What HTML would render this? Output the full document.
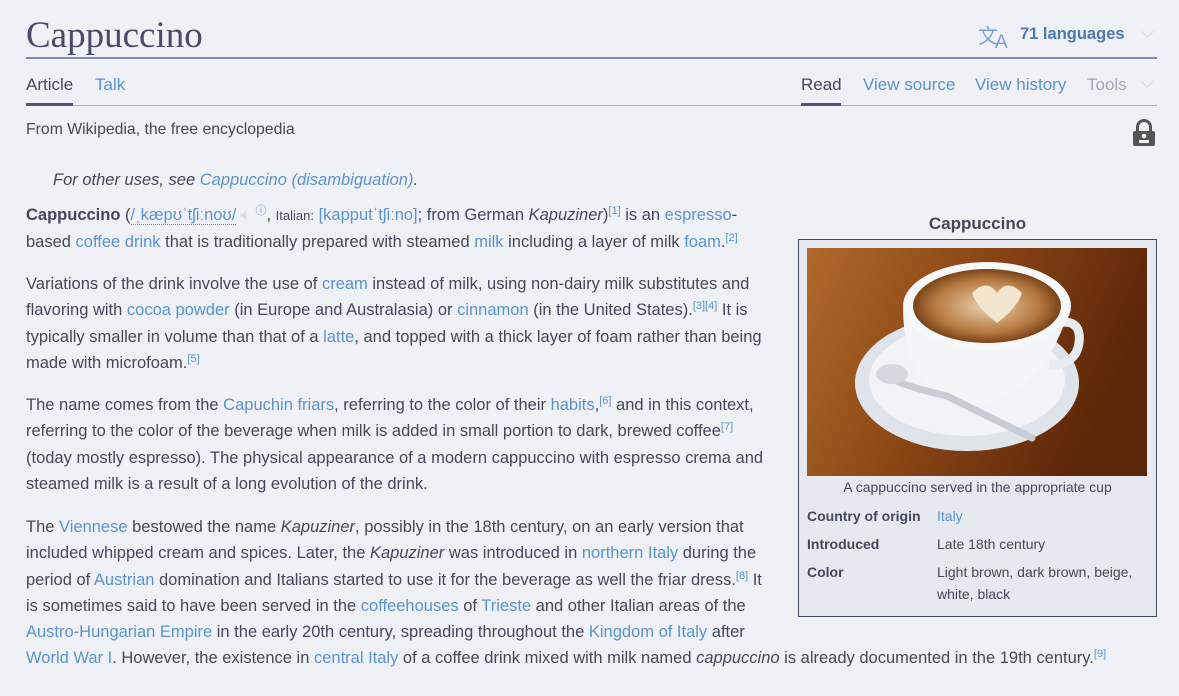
<!DOCTYPE html>
<html><head><meta charset="utf-8"><style>
body{margin:0;width:1179px;height:696px;background:#eff1f6;font-family:"Liberation Sans",sans-serif;color:#45475c;overflow:hidden;position:relative}
a{color:#5b93cf;text-decoration:none}
.abs{position:absolute;white-space:nowrap}
h1{position:absolute;left:26px;top:14px;margin:0;font-family:"Liberation Serif",serif;font-weight:normal;font-size:37px;color:#4a4c66}
.rule1{position:absolute;left:26px;top:57px;width:1131px;height:2px;background:#7d8bab}
.rule2{position:absolute;left:26px;top:105px;width:1131px;height:1px;background:#a8b0c6}
.tab{position:absolute;top:75px;font-size:17px}
.sel{position:absolute;top:103px;height:3px;background:#565872}
.txt{position:absolute;left:26px;width:760px;font-size:16.5px;line-height:26.3px;white-space:nowrap}
sup{font-size:11px;line-height:0;vertical-align:6px;color:#5b93cf}
.ib{position:absolute;left:798px;top:239px;width:357px;height:376px;border:1px solid #3f4a60;background:#e6e9f0}
.ib td{font-size:14px;padding:0;vertical-align:top}
.chev{position:absolute;width:8px;height:8px;border-right:1.5px solid #d6dbe6;border-bottom:1.5px solid #d6dbe6;transform:rotate(45deg)}
</style></head><body>
<h1>Cappuccino</h1>
<div class="abs" style="left:978px;top:20px;font-size:20px;color:#7f9fdc;letter-spacing:-3px">文<span style="font-size:19px;position:relative;top:5px">A</span></div>
<div class="abs" style="left:1020px;top:25px;font-size:16.5px;font-weight:bold;color:#4d78b0">71 languages</div>
<div class="chev" style="left:1143px;top:27px"></div>
<div class="rule1"></div>
<div class="tab" style="left:26px">Article</div>
<div class="tab" style="left:95px"><a>Talk</a></div>
<div class="tab" style="left:801px">Read</div>
<div class="tab" style="left:863px"><a>View source</a></div>
<div class="tab" style="left:975px"><a>View history</a></div>
<div class="tab" style="left:1087px;color:#a4a7ba">Tools</div>
<div class="chev" style="left:1143px;top:77px"></div>
<div class="rule2"></div>
<div class="sel" style="left:26px;width:47px"></div>
<div class="sel" style="left:801px;width:40px"></div>
<div class="abs" style="left:26px;top:121px;font-size:15.8px">From Wikipedia, the free encyclopedia</div>
<svg class="abs" style="left:1133px;top:118px" width="22" height="29" viewBox="0 0 22 29"><path d="M4.5 14V9a6.5 6.5 0 0 1 13 0v5" fill="none" stroke="#555" stroke-width="3"/><rect x="0" y="13" width="22" height="15" rx="2" fill="#555"/><circle cx="11" cy="18" r="2.3" fill="#fff"/><rect x="6" y="22" width="10" height="3" rx="1" fill="#fff"/></svg>
<div class="abs" style="left:53px;top:171px;font-size:16.5px;font-style:italic">For other uses, see <a>Cappuccino (disambiguation)</a>.</div>

<div class="txt" style="top:202px"><b>Cappuccino</b> (<a style="border-bottom:1px dotted #5b93cf">/ˌkæpʊˈtʃiːnoʊ/</a> <span style="color:#ddd">🔈︎</span> <sup>ⓘ</sup>, <span style="font-size:13px">Italian:</span> <a>[kapputˈtʃiːno]</a>; from German <i>Kapuziner</i>)<sup>[1]</sup> is an <a>espresso</a>-<br>based <a>coffee drink</a> that is traditionally prepared with steamed <a>milk</a> including a layer of milk <a>foam</a>.<sup>[2]</sup></div>
<div class="txt" style="top:271px">Variations of the drink involve the use of <a>cream</a> instead of milk, using non-dairy milk substitutes and<br>flavoring with <a>cocoa powder</a> (in Europe and Australasia) or <a>cinnamon</a> (in the United States).<sup>[3][4]</sup> It is<br>typically smaller in volume than that of a <a>latte</a>, and topped with a thick layer of foam rather than being<br>made with microfoam.<sup>[5]</sup></div>
<div class="txt" style="top:392px">The name comes from the <a>Capuchin friars</a>, referring to the color of their <a>habits</a>,<sup>[6]</sup> and in this context,<br>referring to the color of the beverage when milk is added in small portion to dark, brewed coffee<sup>[7]</sup><br>(today mostly espresso). The physical appearance of a modern cappuccino with espresso crema and<br>steamed milk is a result of a long evolution of the drink.</div>
<div class="txt" style="top:514px">The <a>Viennese</a> bestowed the name <i>Kapuziner</i>, possibly in the 18th century, on an early version that<br>included whipped cream and spices. Later, the <i>Kapuziner</i> was introduced in <a>northern Italy</a> during the<br>period of <a>Austrian</a> domination and Italians started to use it for the beverage as well the friar dress.<sup>[8]</sup> It<br>is sometimes said to have been served in the <a>coffeehouses</a> of <a>Trieste</a> and other Italian areas of the<br><a>Austro-Hungarian Empire</a> in the early 20th century, spreading throughout the <a>Kingdom of Italy</a> after<br><a>World War I</a>. However, the existence in <a>central Italy</a> of a coffee drink mixed with milk named <i>cappuccino</i> is already documented in the 19th century.<sup>[9]</sup></div>

<div class="abs" style="left:798px;top:214px;width:359px;text-align:center;font-weight:bold;font-size:17px">Cappuccino</div>
<div class="ib">
<svg style="position:absolute;left:8px;top:8px" width="340" height="228" viewBox="0 0 340 228">
<defs><linearGradient id="w" x1="0" y1="0" x2="1" y2="0.3"><stop offset="0" stop-color="#b06a2c"/><stop offset="0.5" stop-color="#8a4515"/><stop offset="1" stop-color="#5c2608"/></linearGradient>
<radialGradient id="f" cx="0.5" cy="0.5" r="0.5"><stop offset="0" stop-color="#e9d2ae"/><stop offset="0.7" stop-color="#b77a42"/><stop offset="1" stop-color="#7a4418"/></radialGradient></defs>
<rect width="340" height="228" fill="url(#w)"/>
<ellipse cx="160" cy="135" rx="112" ry="68" fill="#dfe3ea"/>
<ellipse cx="160" cy="132" rx="98" ry="56" fill="#f1f3f6"/>
<path d="M250 75 q25 -5 22 20 q-3 22 -30 22" fill="none" stroke="#e8ebef" stroke-width="9"/>
<path d="M96 62 Q98 150 165 158 Q235 150 262 62 Z" fill="#f4f5f7"/>
<ellipse cx="180" cy="58" rx="84" ry="44" fill="#f7f8fa"/>
<ellipse cx="180" cy="58" rx="74" ry="37" fill="url(#f)"/>
<path d="M165 45 q15 -15 25 0 q10 -15 25 0 q-5 15 -25 30 q-20 -15 -25 -30z" fill="#f3e6cf"/>
<path d="M80 128 Q95 138 140 148 L225 190" stroke="#c8ccd3" stroke-width="7" fill="none" stroke-linecap="round"/>
<ellipse cx="85" cy="126" rx="16" ry="10" fill="#d5d9df"/>
</svg>
<div style="position:absolute;left:0;top:239px;width:357px;text-align:center;font-size:14px">A cappuccino served in the appropriate cup</div>
<table style="position:absolute;left:8px;top:268px;border-spacing:0">
<tr style="height:28px"><td style="width:130px;font-weight:bold">Country of origin</td><td><a>Italy</a></td></tr>
<tr style="height:28px"><td style="font-weight:bold">Introduced</td><td>Late 18th century</td></tr>
<tr><td style="font-weight:bold">Color</td><td style="line-height:22px;position:relative;top:-3px">Light brown, dark brown, beige,<br>white, black</td></tr>
</table>
</div>
</body></html>
